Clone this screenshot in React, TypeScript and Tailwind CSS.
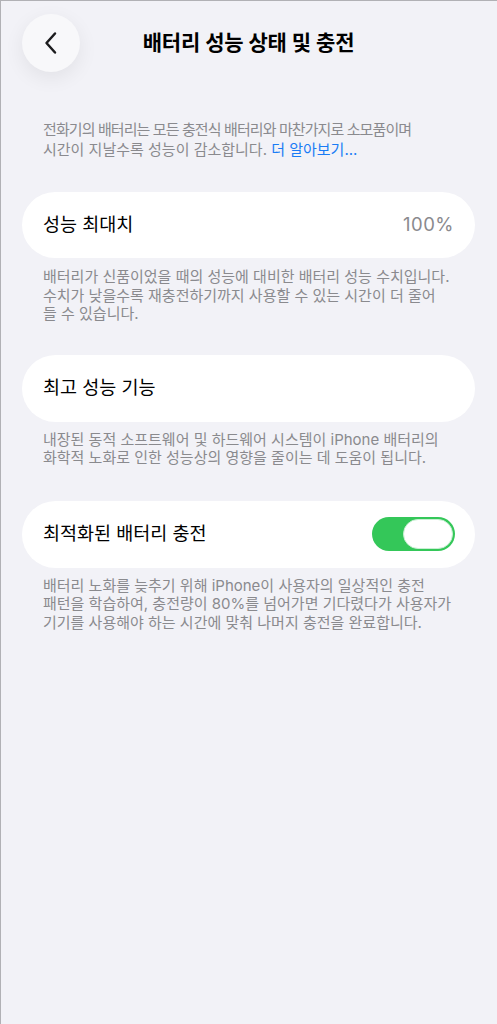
import React from 'react';

const font = { fontFamily: '"Inter", "Noto Sans CJK KR", sans-serif' };

const Footnote = ({ lines }: { lines: React.ReactNode[] }) => (
  <div className="pl-[42px] pr-[10px] text-[15px] leading-[18.5px] text-[#8a8a8e] whitespace-nowrap">
    {lines.map((l, i) => (
      <div key={i}>{l}</div>
    ))}
  </div>
);

const Toggle = ({ on }: { on: boolean }) => (
  <div
    className={`w-[83px] h-[34px] rounded-full p-[2px] flex items-center ${
      on ? 'bg-[#34c759] justify-end' : 'bg-[#e9e9eb] justify-start'
    }`}
  >
    <div className="w-[50px] h-[30px] rounded-full bg-white border border-[#c9efd3]" />
  </div>
);

const App = () => {
  return (
    <div
      className="w-[497px] h-[1024px] bg-[#f2f2f7] border-t border-l border-[#b1b1b5] overflow-hidden"
      style={font}
    >
      {/* header */}
      <div className="grid grid-cols-[58px_1fr_58px] items-center pt-[13px] pl-[21px] pr-[22px]">
        <button className="w-[58px] h-[58px] rounded-full bg-[#f8f8fa] shadow-[0_6px_20px_rgba(0,0,0,0.07)] flex items-center justify-center">
          <svg width="16" height="24" viewBox="0 0 16 24" fill="none">
            <path
              d="M12 2.5 L3.5 12 L12 21.5"
              stroke="#1c1c1e"
              strokeWidth="2.5"
              strokeLinecap="round"
              strokeLinejoin="round"
            />
          </svg>
        </button>
        <h1 className="text-center text-[21px] font-semibold text-black tracking-[-0.2px]">
          배터리 성능 상태 및 충전
        </h1>
        <div />
      </div>

      {/* intro */}
      <div className="mt-[48px] pl-[42px] pr-[10px] text-[15px] leading-[20px] text-[#8a8a8e] whitespace-nowrap">
        <div className="tracking-[-0.9px]">전화기의 배터리는 모든 충전식 배터리와 마찬가지로 소모품이며</div>
        <div>
          시간이 지날수록 성능이 감소합니다. <span className="text-[#1a7cf5]">더 알아보기...</span>
        </div>
      </div>

      {/* 성능 최대치 */}
      <div className="mt-[32px] ml-[21px] mr-[22px] h-[66px] rounded-full bg-white flex items-center justify-between pl-[21px] pr-[21px]">
        <span className="text-[18.5px] text-black">성능 최대치</span>
        <span className="text-[18.5px] tracking-[0.5px] text-[#8a8a8e]">100%</span>
      </div>
      <div className="mt-[10px]">
        <Footnote
          lines={[
            '배터리가 신품이었을 때의 성능에 대비한 배터리 성능 수치입니다.',
            '수치가 낮을수록 재충전하기까지 사용할 수 있는 시간이 더 줄어',
            '들 수 있습니다.',
          ]}
        />
      </div>

      {/* 최고 성능 기능 */}
      <div className="mt-[31px] ml-[21px] mr-[22px] h-[67px] rounded-full bg-white flex items-center pl-[21px] pr-[21px]">
        <span className="text-[18.5px] text-black">최고 성능 기능</span>
      </div>
      <div className="mt-[9px]">
        <Footnote
          lines={[
            '내장된 동적 소프트웨어 및 하드웨어 시스템이 iPhone 배터리의',
            '화학적 노화로 인한 성능상의 영향을 줄이는 데 도움이 됩니다.',
          ]}
        />
      </div>

      {/* 최적화된 배터리 충전 */}
      <div className="mt-[33px] ml-[21px] mr-[22px] h-[67px] rounded-full bg-white flex items-center justify-between pl-[21px] pr-[20px]">
        <span className="text-[18.5px] text-black">최적화된 배터리 충전</span>
        <Toggle on />
      </div>
      <div className="mt-[9px]">
        <Footnote
          lines={[
            '배터리 노화를 늦추기 위해 iPhone이 사용자의 일상적인 충전',
            '패턴을 학습하여, 충전량이 80%를 넘어가면 기다렸다가 사용자가',
            '기기를 사용해야 하는 시간에 맞춰 나머지 충전을 완료합니다.',
          ]}
        />
      </div>
    </div>
  );
};

export default App;
